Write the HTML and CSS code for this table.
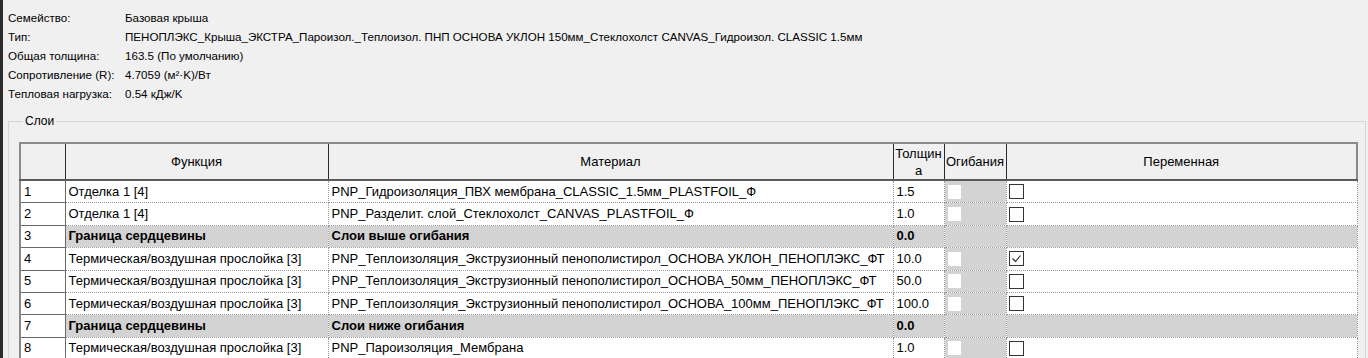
FILE: index.html
```html
<!DOCTYPE html>
<html lang="ru">
<head>
<meta charset="utf-8">
<title>Свойства типа</title>
<link rel="stylesheet" href="styles.css">
</head>
<body>
<div class="page">
  <div class="info">
    <div class="lbl">Семейство:</div><div class="val">Базовая крыша</div>
    <div class="lbl">Тип:</div><div class="val">ПЕНОПЛЭКС_Крыша_ЭКСТРА_Пароизол._Теплоизол. ПНП ОСНОВА УКЛОН 150мм_Стеклохолст CANVAS_Гидроизол. CLASSIC 1.5мм</div>
    <div class="lbl">Общая толщина:</div><div class="val">163.5 (По умолчанию)</div>
    <div class="lbl">Сопротивление (R):</div><div class="val">4.7059 (м²·K)/Вт</div>
    <div class="lbl">Тепловая нагрузка:</div><div class="val">0.54 кДж/K</div>
  </div>
  <fieldset class="group">
    <legend>Слои</legend>
    <table class="tbl">
      <colgroup>
        <col class="c-num"><col class="c-func"><col class="c-mat"><col class="c-thk"><col class="c-bend"><col class="c-var">
      </colgroup>
      <thead>
        <tr>
          <th></th>
          <th>Функция</th>
          <th>Материал</th>
          <th class="thk-h">Толщина</th>
          <th class="bend-h">Огибания</th>
          <th>Переменная</th>
        </tr>
      </thead>
      <tbody>
        <tr>
          <td class="num">1</td>
          <td>Отделка 1 [4]</td>
          <td>PNP_Гидроизоляция_ПВХ мембрана_CLASSIC_1.5мм_PLASTFOIL_Ф</td>
          <td>1.5</td>
          <td class="bend"><span class="dis"></span></td>
          <td><span class="cb"></span></td>
        </tr>
        <tr>
          <td class="num">2</td>
          <td>Отделка 1 [4]</td>
          <td>PNP_Разделит. слой_Стеклохолст_CANVAS_PLASTFOIL_Ф</td>
          <td>1.0</td>
          <td class="bend"><span class="dis"></span></td>
          <td><span class="cb"></span></td>
        </tr>
        <tr class="core">
          <td class="num">3</td>
          <td>Граница сердцевины</td>
          <td>Слои выше огибания</td>
          <td>0.0</td>
          <td class="bend"></td>
          <td></td>
        </tr>
        <tr>
          <td class="num">4</td>
          <td>Термическая/воздушная прослойка [3]</td>
          <td>PNP_Теплоизоляция_Экструзионный пенополистирол_ОСНОВА УКЛОН_ПЕНОПЛЭКС_ФТ</td>
          <td>10.0</td>
          <td class="bend"><span class="dis"></span></td>
          <td><span class="cb"><svg viewBox="0 0 13 13" width="13" height="13"><polyline points="2.5,6.5 5.5,9.5 10.5,3.5" fill="none" stroke="#222" stroke-width="1.1"/></svg></span></td>
        </tr>
        <tr>
          <td class="num">5</td>
          <td>Термическая/воздушная прослойка [3]</td>
          <td>PNP_Теплоизоляция_Экструзионный пенополистирол_ОСНОВА_50мм_ПЕНОПЛЭКС_ФТ</td>
          <td>50.0</td>
          <td class="bend"><span class="dis"></span></td>
          <td><span class="cb"></span></td>
        </tr>
        <tr>
          <td class="num">6</td>
          <td>Термическая/воздушная прослойка [3]</td>
          <td>PNP_Теплоизоляция_Экструзионный пенополистирол_ОСНОВА_100мм_ПЕНОПЛЭКС_ФТ</td>
          <td>100.0</td>
          <td class="bend"><span class="dis"></span></td>
          <td><span class="cb"></span></td>
        </tr>
        <tr class="core">
          <td class="num">7</td>
          <td>Граница сердцевины</td>
          <td>Слои ниже огибания</td>
          <td>0.0</td>
          <td class="bend"></td>
          <td></td>
        </tr>
        <tr>
          <td class="num">8</td>
          <td>Термическая/воздушная прослойка [3]</td>
          <td>PNP_Пароизоляция_Мембрана</td>
          <td>1.0</td>
          <td class="bend"><span class="dis"></span></td>
          <td><span class="cb"></span></td>
        </tr>
      </tbody>
    </table>
  </fieldset>
</div>
</body>
</html>
```

FILE: styles.css
```css
html, body {
  margin: 0;
  padding: 0;
  background: #f0f0f0;
  overflow: hidden;
}
body {
  font-family: "Liberation Sans", Arial, sans-serif;
  font-size: 13px;
  color: #000;
}
.page {
  border-left: 3px solid #2b2b2b;
  height: 358px;
  box-sizing: border-box;
}
.info {
  display: grid;
  grid-template-columns: 117px auto;
  padding: 8px 0 0 5px;
  line-height: 19px;
  font-size: 11.6px;
  white-space: nowrap;
}
.group {
  margin: 11px 2px 0 5px;
  padding: 14px 7px 0 10px;
  border: 1px solid #d5d5d5;
  border-bottom: none;
  min-width: 0;
}
.group legend {
  padding: 0 2px;
  margin-left: 4px;
  line-height: 14px;
  font-size: 12px;
}
.tbl {
  border-collapse: collapse;
  table-layout: fixed;
  width: 1337px;
  background: #fff;
}
.c-num { width: 45px; }
.c-func { width: 263px; }
.c-mat { width: 565px; }
.c-thk { width: 51px; }
.c-bend { width: 62px; }
.c-var { width: 351px; }
.tbl th {
  background: #f0f0f0;
  font-weight: normal;
  height: 35px;
  padding: 0;
  border: 1px solid #2a2a2a;
  border-top: 2px solid #8a8a8a;
  border-bottom: 2px solid #5a5a5a;
  text-align: center;
  line-height: 17px;
}
.tbl th:first-child {
  border-left: 2px solid #8a8a8a;
}
.tbl th:last-child {
  border-right: 2px solid #8a8a8a;
}
.tbl th.thk-h {
  word-break: break-all;
}
.tbl th.bend-h {
  white-space: nowrap;
  overflow: hidden;
}
.tbl td {
  height: 21.4px;
  padding: 0 3px;
  border: 1px dotted #9a9a9a;
  white-space: nowrap;
  overflow: hidden;
  line-height: 16px;
  vertical-align: middle;
}
.tbl td.num {
  border: 1px solid #6a6a6a;
  border-left: 2px solid #8a8a8a;
  background: #fff;
}
.tbl td.bend {
  background: #d3d3d3;
  padding-left: 3px;
}
.tbl tr.core td {
  background: #d3d3d3;
  font-weight: bold;
}
.tbl tr.core td.num {
  background: #fff;
  font-weight: normal;
}
.dis {
  display: block;
  width: 13px;
  height: 14px;
  background: #fff;
}
.cb {
  display: block;
  width: 13px;
  height: 13px;
  border: 1px solid #333;
  background: #fff;
  box-sizing: content-box;
  margin-left: -1px;
}
.cb svg {
  display: block;
  width: 13px;
  height: 13px;
}
```
